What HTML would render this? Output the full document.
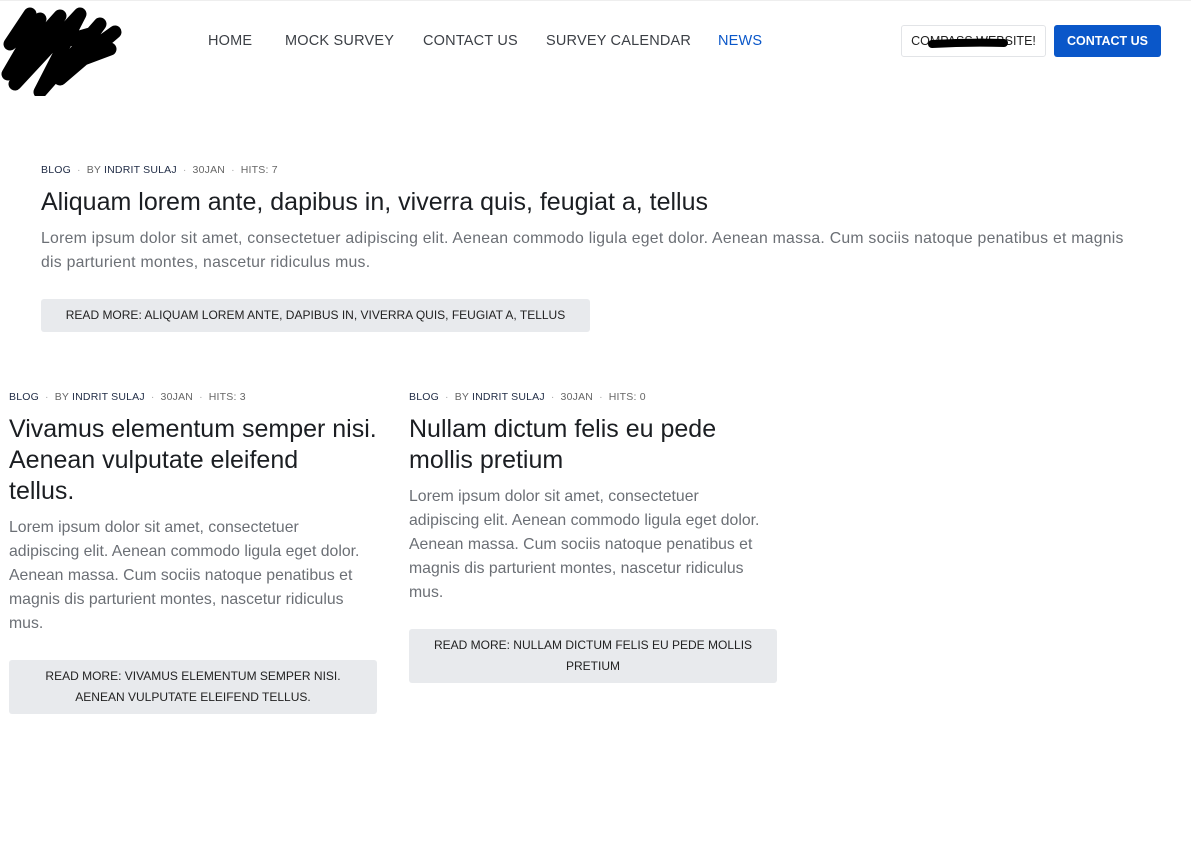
<!DOCTYPE html>
<html><head><meta charset="utf-8"><style>
*{margin:0;padding:0;box-sizing:border-box}
body{width:1191px;height:842px;background:#fff;font-family:"Liberation Sans",sans-serif;position:relative;overflow:hidden;color:#222}
.top{position:absolute;left:0;top:0;width:1191px;height:1px;background:#eee}
.nav a{position:absolute;top:33px;font-size:14.5px;color:#3b3f45;text-decoration:none;letter-spacing:.2px}
.b1{position:absolute;left:901px;top:25px;width:145px;height:32px;border:1px solid #e2e4e7;border-radius:3px;font-size:12.5px;color:#222;text-align:center;line-height:30px}
.b2{position:absolute;left:1054px;top:25px;width:107px;height:32px;background:#0a57c9;border-radius:3px;color:#fff;font-size:12.5px;font-weight:bold;text-align:center;line-height:32px}
.meta{position:absolute;font-size:10.5px;color:#666;letter-spacing:.2px;white-space:nowrap}
.meta b{font-weight:normal;color:#1e2a44}
.meta i{font-style:normal;color:#aaa;margin:0 6px}
h2{position:absolute;font-weight:normal;font-size:25px;line-height:31px;color:#1b1e22;white-space:nowrap}
p{position:absolute;font-size:15.8px;line-height:24px;color:#6b6f75;white-space:nowrap}
.rm{position:absolute;background:#e8eaed;border-radius:3px;font-size:12px;color:#222;text-align:center;line-height:21px;padding:6px 8px;white-space:nowrap}
</style></head><body>
<div class="top"></div>
<svg style="position:absolute;left:0;top:4px" width="125" height="92" viewBox="0 0 125 92"><path d="M30 10 L10 40 L40 15 L8 70 L60 12 L15 80 L80 10 L40 88 L100 20 L60 75 L115 28 L70 60 L110 45 M20 50 L90 30" stroke="#000" stroke-width="13" fill="none" stroke-linecap="round" stroke-linejoin="round"/></svg>
<div class="nav"><a style="left:208px">HOME</a><a style="left:285px">MOCK SURVEY</a><a style="left:423px">CONTACT US</a><a style="left:546px">SURVEY CALENDAR</a><a style="left:718px;color:#0a57c9">NEWS</a></div>
<div class="b1">COMPASS WEBSITE!</div>
<svg style="position:absolute;left:928px;top:37px" width="80" height="14"><path d="M4 7 Q40 5 76 6" stroke="#000" stroke-width="8" stroke-linecap="round" fill="none"/></svg>
<div class="b2">CONTACT US</div>

<div class="meta" style="left:41px;top:164px"><b>BLOG</b><i>·</i>BY <b>INDRIT SULAJ</b><i>·</i>30JAN<i>·</i>HITS: 7</div>
<h2 style="left:41px;top:187px">Aliquam lorem ante, dapibus in, viverra quis, feugiat a, tellus</h2>
<p style="left:41px;top:227px;letter-spacing:.25px">Lorem ipsum dolor sit amet, consectetuer adipiscing elit. Aenean commodo ligula eget dolor. Aenean massa. Cum sociis natoque penatibus et magnis<br>dis parturient montes, nascetur ridiculus mus.</p>
<div class="rm" style="left:41px;top:299px;width:549px;height:33px">READ MORE: ALIQUAM LOREM ANTE, DAPIBUS IN, VIVERRA QUIS, FEUGIAT A, TELLUS</div>

<div class="meta" style="left:9px;top:391px"><b>BLOG</b><i>·</i>BY <b>INDRIT SULAJ</b><i>·</i>30JAN<i>·</i>HITS: 3</div>
<h2 style="left:9px;top:414px">Vivamus elementum semper nisi.<br>Aenean vulputate eleifend<br>tellus.</h2>
<p style="left:9px;top:516px">Lorem ipsum dolor sit amet, consectetuer<br>adipiscing elit. Aenean commodo ligula eget dolor.<br>Aenean massa. Cum sociis natoque penatibus et<br>magnis dis parturient montes, nascetur ridiculus<br>mus.</p>
<div class="rm" style="left:9px;top:660px;width:368px;height:54px">READ MORE: VIVAMUS ELEMENTUM SEMPER NISI.<br>AENEAN VULPUTATE ELEIFEND TELLUS.</div>

<div class="meta" style="left:409px;top:391px"><b>BLOG</b><i>·</i>BY <b>INDRIT SULAJ</b><i>·</i>30JAN<i>·</i>HITS: 0</div>
<h2 style="left:409px;top:414px">Nullam dictum felis eu pede<br>mollis pretium</h2>
<p style="left:409px;top:485px">Lorem ipsum dolor sit amet, consectetuer<br>adipiscing elit. Aenean commodo ligula eget dolor.<br>Aenean massa. Cum sociis natoque penatibus et<br>magnis dis parturient montes, nascetur ridiculus<br>mus.</p>
<div class="rm" style="left:409px;top:629px;width:368px;height:54px">READ MORE: NULLAM DICTUM FELIS EU PEDE MOLLIS<br>PRETIUM</div>
</body></html>
